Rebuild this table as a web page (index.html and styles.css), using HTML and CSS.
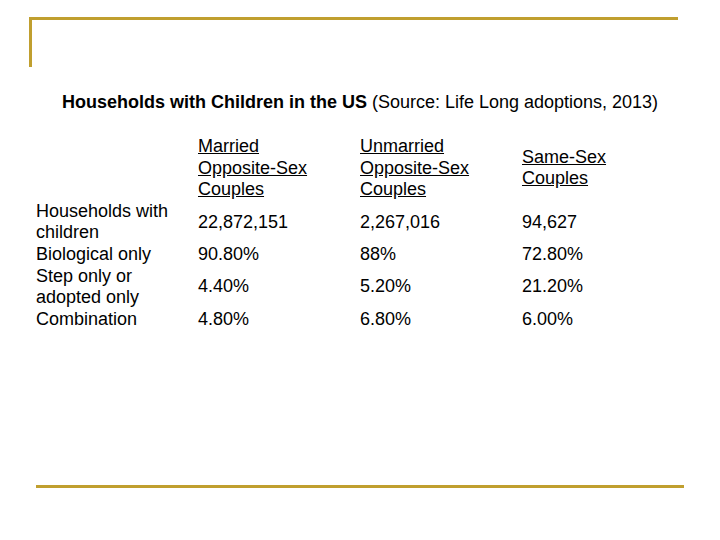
FILE: index.html
```html
<!DOCTYPE html>
<html lang="en">

<head>
    <meta charset="UTF-8">
    <meta name="viewport" content="width=device-width, initial-scale=1.0">
    <title>Households with Children in the US</title>
    <link rel="stylesheet" href="styles.css">
</head>

<body>
    <div class="slide">
        <div class="corner"></div>
        <h1 class="title"><b>Households with Children in the US</b> (Source: Life Long adoptions, 2013)</h1>
        <table class="data">
            <tr class="head">
                <td></td>
                <td><u>Married <span class="nb">Opposite-Sex</span> Couples</u></td>
                <td><u>Unmarried <span class="nb">Opposite-Sex</span> Couples</u></td>
                <td><u><span class="nb">Same-Sex</span> Couples</u></td>
            </tr>
            <tr>
                <td>Households with children</td>
                <td>22,872,151</td>
                <td>2,267,016</td>
                <td>94,627</td>
            </tr>
            <tr>
                <td>Biological only</td>
                <td>90.80%</td>
                <td>88%</td>
                <td>72.80%</td>
            </tr>
            <tr>
                <td>Step only or adopted only</td>
                <td>4.40%</td>
                <td>5.20%</td>
                <td>21.20%</td>
            </tr>
            <tr>
                <td>Combination</td>
                <td>4.80%</td>
                <td>6.80%</td>
                <td>6.00%</td>
            </tr>
        </table>
        <div class="rule"></div>
    </div>
</body>

</html>
```

FILE: styles.css
```css
body {
    margin: 0;
    font-family: "Liberation Sans", Arial, sans-serif;
    color: #000;
    background: #fff;
}

.slide {
    width: 720px;
    height: 540px;
    padding-top: 17px;
    box-sizing: border-box;
}

.corner {
    margin-left: 29px;
    width: 646px;
    height: 47px;
    border-top: 3px solid #c09f2f;
    border-left: 3px solid #c09f2f;
}

.title {
    margin: 24px 0 0;
    font-size: 18px;
    font-weight: normal;
    line-height: 22px;
    text-align: center;
}

.data {
    margin: 23px 0 0 36px;
    border-collapse: collapse;
    font-size: 18px;
    line-height: 21.6px;
}

.data td {
    width: 150px;
    padding: 0 12px 0 0;
    vertical-align: middle;
}

.nb {
    white-space: nowrap;
}

.rule {
    margin: 155px 0 0 36px;
    width: 648px;
    border-top: 3px solid #c09f2f;
}
```
